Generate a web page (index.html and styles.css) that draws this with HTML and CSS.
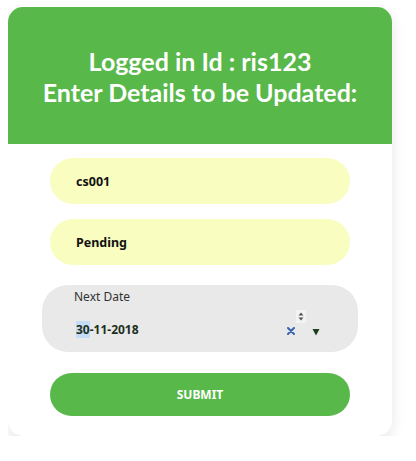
FILE: index.html
```html
<!DOCTYPE html>
<html>
<head>
<meta charset="utf-8">
<link rel="stylesheet" href="styles.css">
</head>
<body>
<div class="card">
  <div class="header">
    <h1 class="title">Logged in Id : ris123<br>Enter Details to be Updated:</h1>
  </div>
  <div class="form">
    <div class="field yellow">cs001</div>
    <div class="field yellow">Pending</div>
    <div class="datebox">
      <div class="datelabel">Next Date</div>
      <div class="daterow">
        <span class="datevalue"><span class="sel">30</span>-11-2018</span>
        <span class="controls">
          <svg class="clear" width="8" height="8" viewBox="0 0 8 8"><path d="M1 1L7 7M7 1L1 7" stroke="#3b64b0" stroke-width="2" stroke-linecap="round"/></svg>
          <span class="spin"><svg width="10" height="13" viewBox="0 0 10 13"><path d="M2.5 5.5L5 2.5L7.5 5.5Z" fill="#555"/><path d="M2.5 7.5L5 10.5L7.5 7.5Z" fill="#555"/></svg></span>
          <svg class="drop" width="8" height="8" viewBox="0 0 8 8"><path d="M0.5 1H7.5L4 7.5Z" fill="#1d3d1d"/></svg>
        </span>
      </div>
    </div>
    <button class="submit">SUBMIT</button>
  </div>
</div>
</body>
</html>
```
FILE: styles.css
```css
body {
  margin: 7px 8px;
  background: #ffffff;
  font-family: "Lato", "Noto Sans", sans-serif;
}
.card {
  width: 384px;
  background: #ffffff;
  border-radius: 15px;
  box-shadow: 0 5px 14px rgba(0, 0, 0, 0.1);
  overflow: hidden;
}
.header {
  height: 137px;
  background: #58b84a;
  display: flex;
  align-items: center;
  justify-content: center;
}
.title {
  margin: 0;
  padding-top: 2px;
  color: #ffffff;
  font-family: "Lato", sans-serif;
  font-weight: 700;
  font-size: 25px;
  line-height: 31px;
  text-align: center;
}
.form {
  display: flex;
  flex-direction: column;
  align-items: center;
  padding: 14px 0 20px;
}
.field {
  box-sizing: border-box;
  width: 300px;
  height: 46px;
  border-radius: 23px;
  padding-left: 26px;
  display: flex;
  align-items: center;
  font-family: "Noto Sans", sans-serif;
  font-weight: 700;
  font-size: 12.5px;
  color: #111;
}
.yellow {
  background: #fafdc0;
}
.field + .field {
  margin-top: 15px;
}
.datebox {
  box-sizing: border-box;
  margin-top: 20px;
  width: 316px;
  height: 67px;
  border-radius: 26px;
  background: #e9e9e9;
  padding: 4px 0 0 32px;
  font-family: "Noto Sans", sans-serif;
}
.datelabel {
  font-size: 12px;
  line-height: 16px;
  color: #333;
}
.daterow {
  display: flex;
  align-items: flex-end;
  margin-top: 8px;
  height: 26px;
}
.datevalue {
  font-weight: 700;
  font-size: 12px;
  line-height: 14px;
  color: #1c2f1c;
  margin-left: 2px;
  margin-bottom: 2px;
}
.sel {
  background: #c5dcf6;
}
.controls {
  margin-left: auto;
  margin-right: 39px;
  position: relative;
  width: 32px;
  height: 26px;
}
.clear {
  position: absolute;
  left: 0;
  bottom: 4px;
}
.spin {
  position: absolute;
  left: 9px;
  top: -3px;
  width: 10px;
  height: 13px;
  background: #f3f3f3;
}
.spin svg { display: block; }
.drop {
  position: absolute;
  left: 25px;
  bottom: 3px;
}
.submit {
  margin-top: 21px;
  width: 300px;
  height: 43px;
  border: none;
  border-radius: 22px;
  background: #58b84a;
  color: #ffffff;
  font-family: "Noto Sans", sans-serif;
  font-weight: 700;
  font-size: 12px;
}
```
